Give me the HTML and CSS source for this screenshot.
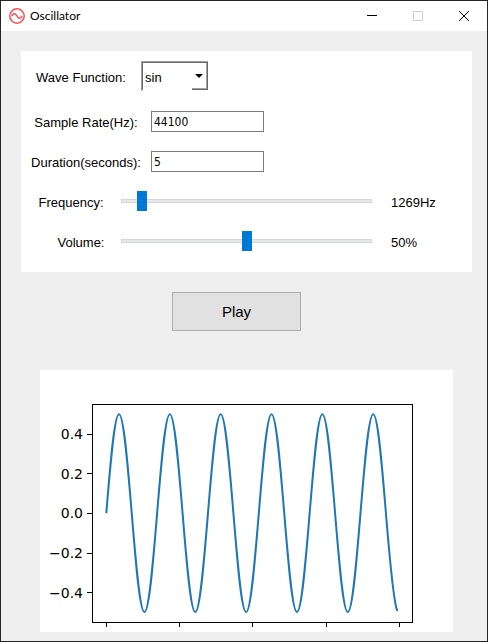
FILE: index.html
```html
<!DOCTYPE html>
<html lang="en">
<head>
<meta charset="utf-8">
<title>Oscillator</title>
<link rel="stylesheet" href="styles.css">
</head>
<body>
<div class="window">
  <header class="titlebar">
    <svg class="app-icon" viewBox="0 0 16 16" aria-hidden="true">
      <circle cx="8" cy="8" r="7.2"/>
      <path d="M2.8 8.2C4 5.2 6.2 5 7.6 7.4l.8 1.2c1.4 2.4 3.6 2.2 4.8-.8"/>
    </svg>
    <h1 class="title">Oscillator</h1>
    <button class="caption" type="button" aria-label="Minimize">
      <svg viewBox="0 0 10 10"><path d="M0 4.5h10"/></svg>
    </button>
    <button class="caption caption-off" type="button" aria-label="Maximize" disabled>
      <svg viewBox="0 0 10 10"><path d="M.5 .5h9v9h-9z"/></svg>
    </button>
    <button class="caption" type="button" aria-label="Close">
      <svg viewBox="0 0 10 10"><path d="M0 0l10 10M10 0L0 10"/></svg>
    </button>
  </header>

  <main class="content">
    <form class="panel">
      <div class="row row-wave">
        <label for="wave">Wave Function:</label>
        <div class="combo">
          <select id="wave"><option>sin</option></select>
          <span class="combo-arrow"></span>
        </div>
      </div>
      <div class="row row-entry">
        <label for="rate">Sample Rate(Hz):</label>
        <input class="entry" id="rate" type="text" value="44100">
      </div>
      <div class="row row-entry">
        <label for="duration">Duration(seconds):</label>
        <input class="entry" id="duration" type="text" value="5">
      </div>
      <div class="row row-slider">
        <label for="frequency">Frequency:</label>
        <input class="slider" id="frequency" type="range" min="0" max="20000" value="1269">
        <output for="frequency">1269Hz</output>
      </div>
      <div class="row row-slider">
        <label class="label-inset" for="volume">Volume:</label>
        <input class="slider" id="volume" type="range" min="0" max="100" value="50">
        <output for="volume">50%</output>
      </div>
    </form>

    <div class="actions">
      <button class="play" type="button">Play</button>
    </div>

    <svg class="plot" viewBox="0 0 413 262" role="img" aria-label="Waveform">
      <g class="axes">
        <rect x="52.5" y="34.5" width="320" height="218"/>
        <path d="M47 64.5h5M47 103.5h5M47 143.5h5M47 183.5h5M47 222.5h5"/>
        <path d="M66.5 253v4M139.5 253v4M212.5 253v4M286.5 253v4M359.5 253v4"/>
      </g>
      <g class="ticks">
        <text x="43" y="69">0.4</text>
        <text x="43" y="109">0.2</text>
        <text x="43" y="148">0.0</text>
        <text x="43" y="188">−0.2</text>
        <text x="43" y="228">−0.4</text>
      </g>
      <path class="wave" d="M66.3 143.1
        c4.15-50.7 8.11-98.9 12.71-98.9s8.56 48.2 12.71 98.9s8.11 98.9 12.71 98.9s8.56-48.2 12.71-98.9
        s8.11-98.9 12.71-98.9s8.56 48.2 12.71 98.9s8.11 98.9 12.71 98.9s8.56-48.2 12.71-98.9
        s8.11-98.9 12.71-98.9s8.56 48.2 12.71 98.9s8.11 98.9 12.71 98.9s8.56-48.2 12.71-98.9
        s8.11-98.9 12.71-98.9s8.56 48.2 12.71 98.9s8.11 98.9 12.71 98.9s8.56-48.2 12.71-98.9
        s8.11-98.9 12.71-98.9s8.56 48.2 12.71 98.9s8.11 98.9 12.71 98.9s8.56-48.2 12.71-98.9
        s8.11-98.9 12.71-98.9s8.56 48.2 12.71 98.9s7.8 91.5 11.5 97.8"/>
    </svg>
  </main>
</div>
</body>
</html>
```
FILE: styles.css
```css
* {
  box-sizing: border-box;
}

body {
  margin: 0;
  background: #efefef;
  color: #000;
  font: 13px/16px "Liberation Sans", Arial, sans-serif;
}

.window {
  min-height: 100vh;
  border: 1px solid #26242a;
  background: #efefef;
}

.titlebar {
  display: flex;
  align-items: center;
  height: 30px;
  padding-left: 8px;
  background: #fff;
}

.app-icon {
  width: 16px;
  height: 16px;
  fill: none;
  stroke: #fb4b52;
  stroke-width: 1.5;
}

.title {
  flex: 1;
  margin: 0 0 0 5px;
  font: 12px/16px Lato, "Open Sans", sans-serif;
}

.caption {
  display: flex;
  align-items: center;
  justify-content: center;
  width: 46px;
  height: 30px;
  padding: 0;
  border: 0;
  background: none;
}

.caption svg {
  width: 10px;
  height: 10px;
  overflow: visible;
  fill: none;
  stroke: #000;
}

.caption-off svg {
  stroke: #ccc;
}

.content {
  padding: 20px 15px 9px 20px;
}

.panel {
  padding: 10px 0 11px;
  background: #fff;
}

.row {
  display: grid;
  align-items: center;
  height: 40px;
}

.row label {
  padding-top: 4px;
  text-align: center;
}

.row-wave {
  grid-template-columns: 120px 67px;
  height: 30px;
  margin-bottom: 10px;
}

.row-entry {
  grid-template-columns: 130px 113px;
}

.row-slider {
  grid-template-columns: 100px 1fr 100px;
}

.row-slider output {
  padding: 4px 0 0 19px;
}

.row .label-inset {
  padding-left: 20px;
}

.combo {
  position: relative;
  height: 30px;
  border: solid #a0a0a0;
  border-width: 1px 0 0 1px;
}

.combo select {
  width: 100%;
  height: 28px;
  padding: 2px 0 0 2px;
  border: solid #696969;
  border-width: 1px 0 0 1px;
  border-radius: 0;
  appearance: none;
  background: #fff;
  color: #000;
  font: inherit;
}

.combo-arrow {
  position: absolute;
  right: 0;
  top: 1px;
  width: 16px;
  height: 27px;
  border: solid #696969;
  border-width: 0 1px 1px 0;
  box-shadow: inset -1px -1px #a0a0a0;
  pointer-events: none;
}

.combo-arrow::before {
  content: "";
  position: absolute;
  left: 3px;
  top: 11px;
  border: 4px solid transparent;
  border-top-color: #000;
  border-bottom: 0;
}

.entry {
  width: 100%;
  height: 21px;
  padding: 2px 2px 0;
  border: 1px solid #7a7a7a;
  background: #fff;
  color: #000;
  font: 12px/16px "DejaVu Sans Condensed", "Noto Sans", sans-serif;
}

.slider {
  width: 100%;
  height: 20px;
  margin: 0;
  appearance: none;
  background: none;
}

.slider::-webkit-slider-runnable-track {
  height: 4px;
  border: 1px solid #d6d6d6;
  background: #e7eaea;
}

.slider::-webkit-slider-thumb {
  width: 10px;
  height: 20px;
  margin-top: -9px;
  border-radius: 0;
  appearance: none;
  background: #0078d7;
}

.actions {
  display: flex;
  justify-content: center;
  padding: 20px 20px 39px 0;
}

.play {
  width: 129px;
  height: 39px;
  padding: 0;
  border: 1px solid #adadad;
  background: #e1e1e1;
  color: #000;
  font: 15px/18px "Liberation Sans", Arial, sans-serif;
}

.plot {
  display: block;
  width: calc(100% - 38px);
  margin: 0 19px;
  background: #fff;
}

.axes {
  fill: none;
  stroke: #000;
}

.ticks {
  font: 14px "DejaVu Sans", sans-serif;
  text-anchor: end;
}

.wave {
  fill: none;
  stroke: #1f77b4;
  stroke-width: 2;
}
```
